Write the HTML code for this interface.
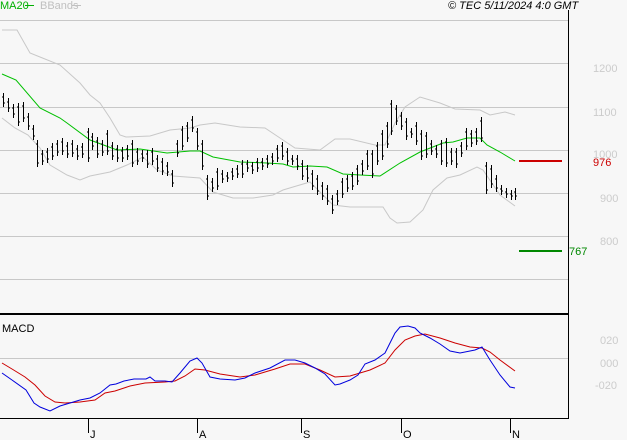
<!DOCTYPE html>
<html><head><style>
html,body{margin:0;padding:0;background:#f7f7f7}
svg{display:block}
text{font-family:"Liberation Sans",sans-serif;font-size:11px}
</style></head><body>
<svg width="627" height="440" viewBox="0 0 627 440" xmlns="http://www.w3.org/2000/svg">
<rect width="627" height="440" fill="#f7f7f7"/>
<g stroke="#c8c8c8" stroke-width="1" shape-rendering="crispEdges">
<line x1="0" y1="20.5" x2="569" y2="20.5"/>
<line x1="0" y1="63.5" x2="569" y2="63.5"/>
<line x1="0" y1="107.5" x2="569" y2="107.5"/>
<line x1="0" y1="150.5" x2="569" y2="150.5"/>
<line x1="0" y1="193.5" x2="569" y2="193.5"/>
<line x1="0" y1="236.5" x2="569" y2="236.5"/>
<line x1="0" y1="279.5" x2="569" y2="279.5"/>
<line x1="0" y1="358.5" x2="569" y2="358.5"/>
</g>
<g fill="#cccccc" font-size="11">
<text x="593" y="72">1200</text>
<text x="593" y="116">1100</text>
<text x="593" y="158">1000</text>
<text x="600" y="202">900</text>
<text x="600" y="245">800</text>
<text x="600" y="344">020</text>
<text x="600" y="367">000</text>
<text x="595" y="389">-020</text>
</g>
<polyline fill="none" stroke="#c8c8c8" points="2,30 17,30 30,53 40,57 60,65 80,83 90,95 100,103 110,118 120,135 126,137 150,136 170,130 190,128 200,125 215,123 240,127 265,128 280,138 295,148 320,150 335,139 350,139 375,145 385,145 395,123 405,107 420,97 440,103 455,109 480,110 490,115 505,112 515,115"/>
<polyline fill="none" stroke="#c8c8c8" points="2,118 15,128 28,135 40,148 50,165 67,175 80,180 90,176 110,172 127,165 143,157 157,170 173,176 200,178 213,192 233,198 253,198 273,195 283,190 293,187 310,182 333,205 350,207 383,207 390,218 397,223 410,222 423,210 433,190 447,178 460,175 477,167 483,170 500,195 515,206"/>
<polyline fill="none" stroke="#00c000" points="2,74 16,80 40,108 60,118 67,123 90,140 117,150 140,149 167,153 190,151 200,151 213,157 240,162 267,163 283,164 293,167 310,166 327,167 343,174 360,175 380,176 400,163 420,152 443,143 453,142 467,138 480,138 487,145 500,152 515,161"/>
<path fill="none" stroke="#000" stroke-width="1" shape-rendering="crispEdges" d="M3.5 93V107M2 97h1M4 103h1M8.5 98V112M7 102h1M9 108h1M13.5 104V118M12 108h1M14 114h1M18.5 103V126M17 107h1M19 122h1M23.5 102V122M22 106h1M24 118h1M28.5 113V130M27 117h1M29 126h1M33.5 125V140M32 129h1M34 136h1M37.5 140V167M36 144h1M38 163h1M42.5 150V165M41 154h1M43 161h1M47.5 148V163M46 152h1M48 159h1M52.5 143V160M51 147h1M53 156h1M57.5 140V156M56 144h1M58 152h1M62.5 138V155M61 142h1M63 151h1M67.5 142V158M66 146h1M68 154h1M72.5 140V157M71 144h1M73 153h1M77.5 145V160M76 149h1M78 156h1M82.5 143V158M81 147h1M83 154h1M88.5 128V162M87 132h1M89 158h1M92.5 133V150M91 137h1M93 146h1M97.5 137V158M96 141h1M98 154h1M102.5 140V156M101 144h1M103 152h1M107.5 130V155M106 134h1M108 151h1M112.5 142V160M111 146h1M113 156h1M117.5 145V162M116 149h1M118 158h1M122.5 147V162M121 151h1M123 158h1M127.5 145V160M126 149h1M128 156h1M132.5 140V167M131 144h1M133 163h1M137.5 148V165M136 152h1M138 161h1M142.5 150V162M141 154h1M143 158h1M147.5 150V168M146 154h1M148 164h1M152.5 148V165M151 152h1M153 161h1M157.5 155V172M156 159h1M158 168h1M162.5 158V175M161 162h1M163 171h1M167.5 162V176M166 166h1M168 172h1M172.5 170V187M171 174h1M173 183h1M177.5 140V157M176 144h1M178 153h1M182.5 126V150M181 130h1M183 146h1M187.5 122V142M186 126h1M188 138h1M192.5 116V132M191 120h1M193 128h1M197.5 128V150M196 132h1M198 146h1M202.5 140V170M201 144h1M203 166h1M207.5 175V200M206 179h1M208 196h1M212.5 178V192M211 182h1M213 188h1M217.5 168V190M216 172h1M218 186h1M222.5 170V183M221 174h1M223 179h1M227.5 172V182M226 176h1M228 178h1M232.5 168V180M231 172h1M233 176h1M237.5 165V178M236 169h1M238 174h1M242.5 160V178M241 164h1M243 174h1M247.5 160V172M246 164h1M248 168h1M252.5 162V174M251 166h1M253 170h1M257.5 158V172M256 162h1M258 168h1M262.5 158V170M261 162h1M263 166h1M267.5 155V168M266 159h1M268 164h1M272.5 153V165M271 157h1M273 161h1M277.5 145V162M276 149h1M278 158h1M282.5 142V160M281 146h1M283 156h1M287.5 148V165M286 152h1M288 161h1M292.5 155V165M291 159h1M293 161h1M297.5 155V170M296 159h1M298 166h1M302.5 160V180M301 164h1M303 176h1M307.5 165V182M306 169h1M308 178h1M312.5 170V190M311 174h1M313 186h1M317.5 175V195M316 179h1M318 191h1M322.5 182V200M321 186h1M323 196h1M327.5 185V205M326 189h1M328 201h1M332.5 195V214M331 199h1M333 210h1M337.5 190V205M336 194h1M338 201h1M342.5 178V198M341 182h1M343 194h1M347.5 175V192M346 179h1M348 188h1M352.5 172V190M351 176h1M353 186h1M357.5 165V185M356 169h1M358 181h1M362.5 160V175M361 164h1M363 171h1M367.5 150V170M366 154h1M368 166h1M372.5 150V178M371 154h1M373 174h1M377.5 142V165M376 146h1M378 161h1M382.5 130V160M381 134h1M383 156h1M387.5 122V148M386 126h1M388 144h1M391.5 100V135M390 104h1M392 131h1M396.5 105V125M395 109h1M397 121h1M401.5 112V130M400 116h1M402 126h1M406.5 118V140M405 122h1M407 136h1M411.5 128V138M410 132h1M412 134h1M416.5 122V145M415 126h1M417 141h1M421.5 130V160M420 134h1M422 156h1M426.5 132V158M425 136h1M427 154h1M431.5 140V155M430 144h1M432 151h1M436.5 145V158M435 149h1M437 154h1M441.5 140V165M440 144h1M442 161h1M446.5 138V167M445 142h1M447 163h1M451.5 148V165M450 152h1M452 161h1M456.5 148V168M455 152h1M457 164h1M461.5 142V157M460 146h1M462 153h1M466.5 128V150M465 132h1M467 146h1M471.5 130V147M470 134h1M472 143h1M476.5 128V145M475 132h1M477 141h1M481.5 117V142M480 121h1M482 138h1M486.5 162V194M485 166h1M487 190h1M491.5 165V188M490 169h1M492 184h1M496.5 175V192M495 179h1M497 188h1M501.5 185V195M500 189h1M502 191h1M506.5 188V198M505 192h1M507 194h1M511.5 190V200M510 194h1M512 196h1M515.5 188V200M514 192h1M516 196h1"/>
<rect x="519" y="160" width="43" height="2" fill="#cc0000"/>
<rect x="519" y="250" width="43" height="2" fill="#008800"/>
<text x="593" y="166" fill="#cc0000">976</text>
<text x="569" y="255" fill="#008800">767</text>
<rect x="568" y="10" width="1" height="409" fill="#000"/>
<rect x="0" y="313" width="569" height="2" fill="#000"/>
<rect x="0" y="418" width="569" height="1" fill="#000"/>
<g fill="#000" shape-rendering="crispEdges">
<rect x="88" y="419" width="1" height="14"/>
<rect x="197" y="419" width="1" height="14"/>
<rect x="301" y="419" width="1" height="14"/>
<rect x="401" y="419" width="1" height="14"/>
<rect x="510" y="419" width="1" height="14"/>
</g>
<g fill="#000" font-size="11">
<text x="90" y="438">J</text>
<text x="199" y="438">A</text>
<text x="303" y="438">S</text>
<text x="403" y="438">O</text>
<text x="512" y="438">N</text>
<text x="2" y="332" font-size="10">MACD</text>
<text x="448" y="9" font-style="italic">© TEC 5/11/2024 4:0 GMT</text>
</g>
<text x="0" y="9" fill="#00b000" font-size="10">MA20</text>
<rect x="25" y="5" width="9" height="1" fill="#00b000"/>
<text x="40" y="9" fill="#c0c0c0" font-size="10">BBands</text>
<rect x="72" y="5" width="9" height="1" fill="#c0c0c0"/>
<polyline fill="none" stroke="#cc0000" points="2,363 12,369 25,377 35,385 45,396 55,402 65,403 80,402 95,400 105,393 115,391 130,386 145,383 165,382 175,381 185,376 195,369 205,370 220,374 240,377 255,375 275,369 290,364 305,364 320,370 335,377 350,376 370,370 385,363 395,350 405,340 415,336 425,334 440,338 455,343 470,347 482,348 490,352 500,360 515,371"/>
<polyline fill="none" stroke="#0000dd" points="2,373 12,380 26,390 34,403 40,407 50,411 60,406 70,403 80,400 90,398 100,393 110,385 116,384 124,381 134,379 146,379 150,377 155,381 165,381 172,382 180,373 190,361 197,358 202,363 210,377 220,379 235,380 245,378 255,373 270,368 285,360 295,360 305,363 315,368 325,374 335,385 340,384 350,380 358,375 365,364 375,360 385,353 390,343 395,333 400,327 408,326 415,328 420,333 430,338 440,344 450,351 460,353 475,350 482,347 490,360 500,375 510,387 515,388"/>
</svg>
</body></html>
